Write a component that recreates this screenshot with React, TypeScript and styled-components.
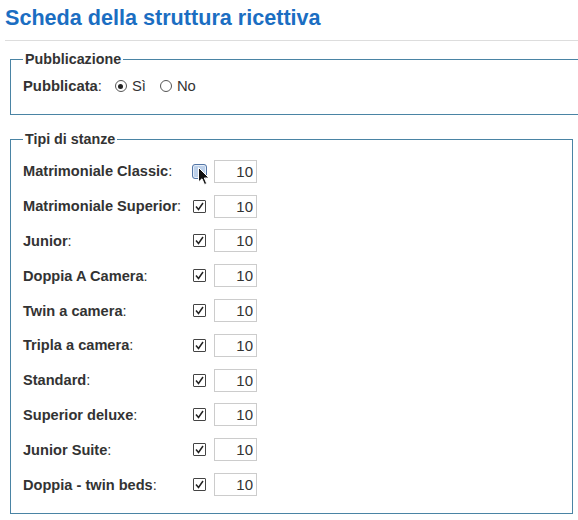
import { FC } from 'react';
import styled, { createGlobalStyle } from 'styled-components';

const GlobalStyle = createGlobalStyle`
  html, body {
    margin: 0;
    padding: 0;
    background: #fff;
    overflow: hidden;
  }
  body {
    font-family: "Liberation Sans", Arial, sans-serif;
    color: #333;
  }
`;

const Page = styled.div`
  padding: 4px 0 0 5px;
  width: 573px;
`;

const Title = styled.h2`
  margin: 0;
  padding-bottom: 8px;
  font-size: 21.6px;
  line-height: 28px;
  font-weight: bold;
  color: #1b6ec2;
  border-bottom: 1px solid #ddd;
  width: 620px;
`;

const Box = styled.fieldset<{ $wide?: boolean }>`
  margin: ${(p) => (p.$wide ? '10px' : '16px')} 0 0 5px;
  padding: 4px 12px 0;
  border: 1px solid #4a84a4;
  width: ${(p) => (p.$wide ? '620px' : '537px')};
  min-width: 0;
`;

const Legend = styled.legend`
  padding: 0 2px;
  font-size: 14.3px;
  line-height: 16px;
  font-weight: bold;
  color: #333;
`;

const InlineRow = styled.div`
  display: flex;
  align-items: center;
  height: 20px;
  padding: 5px 0 18px;
  font-size: 14.8px;
`;

const Label = styled.span<{ $width?: number }>`
  font-weight: bold;
  color: #333;
  ${(p) => (p.$width ? `width: ${p.$width}px;` : 'margin-right: 13px;')}
  flex-shrink: 0;

  &::after {
    content: ':';
    font-weight: normal;
  }
`;

const RadioOption = styled.label`
  display: inline-flex;
  align-items: center;
  gap: 5px;
  margin-right: 14px;
  color: #333;
`;

const RadioCircle = styled.span<{ $checked?: boolean }>`
  position: relative;
  width: 12px;
  height: 12px;
  border: 1px solid #555;
  border-radius: 50%;
  box-sizing: border-box;
  background: #fff;

  &::after {
    content: '';
    display: ${(p) => (p.$checked ? 'block' : 'none')};
    position: absolute;
    top: 2.5px;
    left: 2.5px;
    width: 5px;
    height: 5px;
    border-radius: 50%;
    background: #222;
  }
`;

const RoomList = styled.div`
  display: flex;
  flex-direction: column;
  padding: 3px 0 11px;
`;

const RoomRow = styled.div`
  display: flex;
  align-items: center;
  height: 34.8px;
  font-size: 14.6px;
`;

const CheckSlot = styled.span`
  position: relative;
  display: inline-flex;
  align-items: center;
  justify-content: center;
  width: 15px;
  height: 15px;
  margin: 0 7px 0 -1px;
`;

const Check = styled.span<{ $focused?: boolean }>`
  display: inline-flex;
  align-items: center;
  justify-content: center;
  width: ${(p) => (p.$focused ? '15px' : '13px')};
  height: ${(p) => (p.$focused ? '15px' : '13px')};
  box-sizing: border-box;
  border: 1px solid ${(p) => (p.$focused ? '#5476a6' : '#444')};
  border-radius: ${(p) => (p.$focused ? '3px' : '1px')};
  background: ${(p) => (p.$focused ? '#bcd0ea' : '#fff')};
  box-shadow: ${(p) => (p.$focused ? 'inset 0 0 0 1px #e6eef8' : 'none')};
`;

const Cursor = styled.svg`
  position: absolute;
  left: 6px;
  top: 3px;
  width: 12px;
  height: 19px;
  pointer-events: none;
`;

const Qty = styled.input`
  width: 43px;
  height: 23px;
  box-sizing: border-box;
  border: 1px solid #ccc;
  padding: 0 3px 0 0;
  text-align: right;
  font-family: "Liberation Sans", Arial, sans-serif;
  font-size: 15px;
  color: #333;
  outline: none;
`;

const rooms = [
  'Matrimoniale Classic',
  'Matrimoniale Superior',
  'Junior',
  'Doppia A Camera',
  'Twin a camera',
  'Tripla a camera',
  'Standard',
  'Superior deluxe',
  'Junior Suite',
  'Doppia - twin beds',
];

const RoomCheck: FC<{ focused?: boolean }> = ({ focused }) => (
  <CheckSlot>
    <Check $focused={focused}>
      {!focused && (
        <svg width="9" height="9" viewBox="0 0 9 9">
          <path d="M1 4.5 L3.5 7.5 L8 1" fill="none" stroke="#222" strokeWidth="1.5" />
        </svg>
      )}
    </Check>
    {focused && (
      <Cursor viewBox="0 0 12 19">
        <path
          d="M0.5 0.5 L0.5 15 L4 11.8 L6.5 17.5 L8.7 16.6 L6.3 11 L11 11 Z"
          fill="#111"
          stroke="#fff"
          strokeWidth="1"
          strokeLinejoin="round"
        />
      </Cursor>
    )}
  </CheckSlot>
);

const App: FC = () => {
  return (
    <Page>
      <GlobalStyle />
      <Title>Scheda della struttura ricettiva</Title>

      <Box $wide>
        <Legend>Pubblicazione</Legend>
        <InlineRow>
          <Label>Pubblicata</Label>
          <RadioOption>
            <RadioCircle $checked />
            Sì
          </RadioOption>
          <RadioOption>
            <RadioCircle />
            No
          </RadioOption>
        </InlineRow>
      </Box>

      <Box>
        <Legend>Tipi di stanze</Legend>
        <RoomList>
          {rooms.map((name, i) => (
            <RoomRow key={name}>
              <Label $width={170}>{name}</Label>
              <RoomCheck focused={i === 0} />
              <Qty defaultValue="10" />
            </RoomRow>
          ))}
        </RoomList>
      </Box>
    </Page>
  );
};

export default App;
